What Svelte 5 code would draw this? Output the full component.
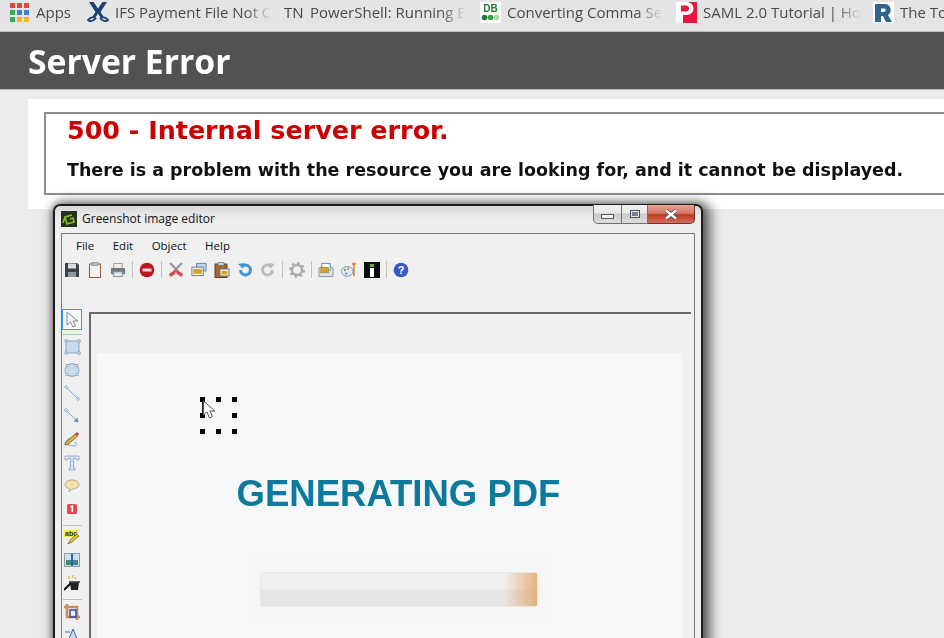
<script>
  const bookmarks = [
    { label: 'Apps', icon: 'apps', width: 58 },
    { label: 'IFS Payment File Not C', icon: 'ifs', width: 178, fade: true },
    { label: 'PowerShell: Running E', icon: 'tn', width: 177, fade: true },
    { label: 'Converting Comma Se', icon: 'db', width: 177, fade: true },
    { label: 'SAML 2.0 Tutorial | Ho', icon: 'p', width: 178, fade: true },
    { label: 'The To', icon: 'r', width: 71 }
  ];
  const appColors = ['#e0483e', '#e0483e', '#e0483e', '#3aa757', '#3b82d6', '#3b82d6', '#3aa757', '#f0b429', '#f0b429'];
  const menus = ['File', 'Edit', 'Object', 'Help'];
  const dots = [
    [0, 0], [16, 0], [32, 0],
    [0, 16], [32, 16],
    [0, 32], [16, 32], [32, 32]
  ];
</script>

<div class="page">
  <div class="bookmarks">
    {#each bookmarks as b}
      <div class="bookmark {b.icon}" style="width: {b.width}px">
        {#if b.icon === 'apps'}
          <div class="apps-grid">
            {#each appColors as c}<i style="background: {c}"></i>{/each}
          </div>
        {:else if b.icon === 'ifs'}
          <svg width="22" height="21" viewBox="0 0 22 21">
            <path d="M2 0h4.500L11 6.500 15.500 0H20l-6.500 10 3 4.500-2.500 1.500-3-4.500L8 16l-2.500-1.500 3-4.500z" fill="#1d3f73" />
            <path d="M1 18c3-3.500 6-3 7.500-1.500-2 2.500-5.500 3.500-7.500 1.500zM21 18c-3-3.500-6-3-7.500-1.500 2 2.500 5.500 3.500 7.500 1.500z" fill="none" stroke="#1d3f73" stroke-width="1.800" />
          </svg>
        {:else if b.icon === 'tn'}
          <span class="tn-mark">TN</span>
        {:else if b.icon === 'db'}
          <svg class="fav" width="21" height="21" viewBox="0 0 21 21">
            <rect width="21" height="21" fill="#fff" />
            <text x="10.500" y="10" text-anchor="middle" class="db-text">DB</text>
            <circle cx="4.500" cy="15.500" r="2.800" fill="#1f7a34" />
            <circle cx="10.500" cy="15.500" r="2.800" fill="#3d9b4e" />
            <circle cx="16.500" cy="15.500" r="2.800" fill="#a8d8ac" />
          </svg>
        {:else if b.icon === 'p'}
          <svg class="fav" width="21" height="21" viewBox="0 0 21 21">
            <rect width="21" height="21" fill="#e8173f" />
            <path d="M0 0h11a6.500 6.500 0 0 1 0 13H7v8H0z" fill="#fff" />
            <path d="M5 3.500h5a3 3 0 0 1 0 6H5z" fill="#e8173f" />
          </svg>
        {:else if b.icon === 'r'}
          <svg class="fav" width="21" height="21" viewBox="0 0 21 21">
            <rect width="21" height="21" fill="#fff" />
            <path d="M2 2h10a6 6 0 0 1 3 11l4 7h-6l-3-6H8v6H2zM8 6.500V10h3a1.700 1.700 0 0 0 0-3.500z" fill="#2f6690" />
          </svg>
        {/if}
        <span class="bm-label" class:fade={b.fade}>{b.label}</span>
      </div>
    {/each}
  </div>

  <header class="site-header"><h1>Server Error</h1></header>

  <main class="content">
    <fieldset class="error-box">
      <h2>500 - Internal server error.</h2>
      <h3>There is a problem with the resource you are looking for, and it cannot be displayed.</h3>
    </fieldset>
  </main>

  <section class="window">
    <div class="titlebar">
      <svg class="app-icon" width="16" height="16" viewBox="0 0 16 16">
        <rect width="16" height="16" fill="#26301e" />
        <path d="M2 12L4 6l7-2M4 6l2 7 7-2-1-4-3 1" fill="none" stroke="#7fc31c" stroke-width="1.600" />
      </svg>
      <span class="title">Greenshot image editor</span>
      <div class="caption-btns">
        <button class="cap min" aria-label="Minimize"><i></i></button>
        <button class="cap max" aria-label="Maximize"><i></i></button>
        <button class="cap close" aria-label="Close">
          <svg width="16" height="11" viewBox="0 0 16 11">
            <path d="M3 1.500l10 8M13 1.500l-10 8" fill="none" stroke="#4a4f60" stroke-width="4" />
            <path d="M3 1.500l10 8M13 1.500l-10 8" fill="none" stroke="#fff" stroke-width="2.400" />
          </svg>
        </button>
      </div>
    </div>

    <div class="client">
      <nav class="menu">
        {#each menus as m}<span>{m}</span>{/each}
      </nav>

      <div class="toolbar">
        <svg width="16" height="16" viewBox="0 0 16 16"><path d="M1 1h12l2 2v12H1z" fill="#3d4248" /><rect x="4" y="1.500" width="8" height="5" fill="#d9dde0" /><rect x="4" y="10" width="8" height="5" fill="#8d959c" /></svg>
        <svg width="16" height="16" viewBox="0 0 16 16"><rect x="2.500" y="2" width="11" height="13.500" fill="#f6f3ee" stroke="#8a5a3a" /><rect x="5" y="0.500" width="6" height="3" fill="#b9bdc1" stroke="#777" stroke-width=".6" /></svg>
        <svg width="16" height="16" viewBox="0 0 17 16"><rect x="4" y="1" width="9" height="6" fill="#eee" stroke="#999" /><rect x="1" y="6" width="15" height="6.500" rx="1" fill="#6f7a82" /><rect x="4" y="10" width="9" height="5" fill="#e7eaec" stroke="#8b9399" /></svg>
        <i class="sep"></i>
        <svg width="16" height="16" viewBox="0 0 16 16"><circle cx="8" cy="8" r="7.300" fill="#bb1520" /><rect x="3.500" y="6.500" width="9" height="3" fill="#f4d6d6" /></svg>
        <i class="sep"></i>
        <svg width="16" height="16" viewBox="0 0 16 16"><path d="M2 1l8 8M14 1L6 9" stroke="#8e979c" stroke-width="2" fill="none" /><path d="M6 8.500L1 12l1.500 3L7 12l1-2 1 2 4.500 3 1.500-3-5-3.500z" fill="#d9484a" /></svg>
        <svg width="16" height="16" viewBox="0 0 17 16"><rect x="6" y="1" width="10" height="8" fill="#b9d4ee" stroke="#6c86a0" /><rect x="1" y="5" width="12" height="9" fill="#f2f2ea" stroke="#6c7a88" /><rect x="2.500" y="7" width="9" height="5" fill="#d8a21f" /></svg>
        <svg width="16" height="16" viewBox="0 0 16 16"><rect x="1" y="2" width="12" height="13.500" fill="#a5683a" stroke="#6b4020" /><rect x="4" y="0.500" width="6" height="3" fill="#c9cdd0" stroke="#666" stroke-width=".6" /><rect x="6" y="7" width="9" height="7" fill="#f6f3e8" stroke="#6c7a88" /><rect x="7.500" y="9" width="6" height="3.500" fill="#d8a21f" /></svg>
        <svg width="16" height="16" viewBox="0 0 16 16"><path d="M3.500 8a5 5 0 1 0 2-4" fill="none" stroke="#3f94dc" stroke-width="3" /><path d="M1 2l6-1-1 6z" fill="#3f94dc" /></svg>
        <svg width="16" height="16" viewBox="0 0 16 16"><path d="M12.500 8a5 5 0 1 1-2-4" fill="none" stroke="#b9bcbe" stroke-width="3" /><path d="M15 2L9 1l1 6z" fill="#b9bcbe" /></svg>
        <i class="sep"></i>
        <svg width="16" height="16" viewBox="0 0 16 16"><circle cx="8" cy="8" r="5" fill="none" stroke="#a9acaf" stroke-width="2.400" /><circle cx="8" cy="8" r="7" fill="none" stroke="#a3a7aa" stroke-width="1.800" stroke-dasharray="2.500 3" /></svg>
        <i class="sep"></i>
        <svg width="16" height="16" viewBox="0 0 17 16"><path d="M1 6l7-4 8 4v9H1z" fill="#d7e3ea" stroke="#7e95a5" /><rect x="4" y="1" width="9" height="7" fill="#fff" stroke="#5b8fc5" /><rect x="3" y="5" width="8" height="6" fill="#d8a21f" stroke="#8a7a3a" stroke-width=".6" /></svg>
        <svg width="16" height="16" viewBox="0 0 18 16"><ellipse cx="7" cy="9.500" rx="6.500" ry="5.500" fill="#e9eef3" stroke="#5d92c2" /><circle cx="4.500" cy="8" r="1.300" fill="#4aa84a" /><circle cx="8" cy="6.500" r="1.300" fill="#e0803a" /><circle cx="6" cy="12" r="1.300" fill="#3f7fc9" /><path d="M14.500 1v14" stroke="#e8862a" stroke-width="2" /><path d="M12.500 1h4" stroke="#b98a5a" stroke-width="2.500" /></svg>
        <svg width="16" height="16" viewBox="0 0 16 16"><rect width="16" height="16" fill="#0d0d0d" /><rect x="6" y="2" width="4" height="3" fill="#55b62a" /><rect x="6" y="6" width="4" height="9" fill="#fff" /></svg>
        <i class="sep"></i>
        <svg width="16" height="16" viewBox="0 0 16 16"><circle cx="8" cy="8" r="7.300" fill="#3a58c4" /><text x="8" y="12" text-anchor="middle" class="help-q">?</text></svg>
      </div>

      <div class="workspace">
        <aside class="tools">
          <div class="tool selected">
            <svg width="14" height="17" viewBox="0 0 14 17"><path d="M2 1v13l3.500-3 2.500 5 2.500-1-2.500-5h5z" fill="#f4f4f4" stroke="#8a8d92" /></svg>
          </div>
          <i class="tool-sep"></i>
          <div class="tool"><svg width="17" height="16" viewBox="0 0 17 16"><rect x="2" y="2" width="13" height="12" fill="#c8d9ec" stroke="#85a3c5" /><g fill="#fff" stroke="#6f8fb5" stroke-width=".8"><circle cx="2" cy="2" r="1.300" /><circle cx="15" cy="2" r="1.300" /><circle cx="2" cy="14" r="1.300" /><circle cx="15" cy="14" r="1.300" /></g></svg></div>
          <div class="tool"><svg width="16" height="16" viewBox="0 0 16 16"><ellipse cx="8" cy="8" rx="7" ry="6.300" fill="#c8d9ec" stroke="#85a3c5" /><g fill="#fff" stroke="#6f8fb5" stroke-width=".8"><circle cx="3" cy="3.500" r="1.200" /><circle cx="13" cy="3.500" r="1.200" /><circle cx="3" cy="12.500" r="1.200" /><circle cx="13" cy="12.500" r="1.200" /></g></svg></div>
          <div class="tool"><svg width="16" height="16" viewBox="0 0 16 16"><path d="M2 2l12 12" stroke="#85a3c5" /><circle cx="2" cy="2" r="1.300" fill="#fff" stroke="#6f8fb5" stroke-width=".7" /><circle cx="14" cy="14" r="1.300" fill="#fff" stroke="#6f8fb5" stroke-width=".7" /></svg></div>
          <div class="tool"><svg width="16" height="16" viewBox="0 0 16 16"><path d="M2 2l11 11" stroke="#85a3c5" /><circle cx="2" cy="2" r="1.300" fill="#fff" stroke="#6f8fb5" stroke-width=".7" /><path d="M14.500 14.500l-5-1 4-4z" fill="#6f8fb5" /></svg></div>
          <div class="tool"><svg width="16" height="16" viewBox="0 0 16 16"><path d="M6 7c-6 2-4 8 3 8 5 0 4-4 1-4" fill="none" stroke="#85a3c5" /><path d="M1 12l10-9 2.500 2L4 13.500 1 14z" fill="#e8b030" stroke="#333" stroke-width=".6" /><path d="M11 3l2.500 2 1.500-2-2-2z" fill="#d43c3c" /></svg></div>
          <div class="tool"><svg width="16" height="16" viewBox="0 0 16 16"><path d="M1 1h14v4h-2l-1-1.500H9.500V13H11v2H5v-2h1.500V3.500H4L3 5H1z" fill="#d6e3f0" stroke="#85a3c5" stroke-width=".8" /></svg></div>
          <div class="tool"><svg width="16" height="16" viewBox="0 0 16 16"><path d="M8 2c4 0 7 2 7 4.500S12 11 8 11l-3 3 .5-3.500C3 10 1 8.500 1 6.500 1 4 4 2 8 2z" fill="#f3e2a8" stroke="#b0a98e" /></svg></div>
          <div class="tool"><svg width="12" height="12" viewBox="0 0 12 12"><rect x="1" y="1" width="10" height="10" rx="1.500" fill="#e8484c" /><path d="M4.500 4L6.300 3v6" fill="none" stroke="#fff" stroke-width="1.500" /></svg></div>
          <i class="tool-sep"></i>
          <div class="tool"><svg width="16" height="16" viewBox="0 0 16 16"><rect y="1" width="14" height="7" fill="#f2ec3c" /><text x="1" y="7" class="abc">abc</text><path d="M4 15l2-4 7-6 2 2-7 6z" fill="#e2c81e" stroke="#444" stroke-width=".6" /></svg></div>
          <div class="tool"><svg width="16" height="14" viewBox="0 0 16 14"><rect x=".5" y=".5" width="15" height="13" fill="#cfe0ea" stroke="#8f9ca5" /><rect x="2" y="7" width="12" height="5" fill="#3f8a7a" /><rect x="7" y="1" width="2" height="12" fill="#2b62b5" /></svg></div>
          <div class="tool"><svg width="16" height="16" viewBox="0 0 16 16"><path d="M6 7h9l-1 8H7z" fill="#222" /><path d="M5 7h11" stroke="#444" stroke-width="1.600" /><path d="M0 15l7-7" stroke="#111" stroke-width="2.200" /><path d="M5 1v3M9 0v3M12 2l-1 2" stroke="#d8b23a" stroke-width="1.200" /></svg></div>
          <i class="tool-sep"></i>
          <div class="tool"><svg width="16" height="16" viewBox="0 0 16 16"><path d="M3 0v13h13M0 3h13v13" fill="none" stroke="#c98d5a" stroke-width="2.600" /><rect x="6" y="6" width="6" height="7" fill="none" stroke="#2b4fb0" stroke-width="1.500" /></svg></div>
          <div class="tool"><svg width="16" height="16" viewBox="0 0 16 16"><path d="M9 2l5 12H4z" fill="#c8d9ec" stroke="#3a66b5" /><path d="M1 5h5" stroke="#3a66b5" /></svg></div>
        </aside>

        <div class="canvas">
          <div class="capture">
            <h4>GENERATING PDF</h4>
            <div class="progress-wrap"><div class="progress"></div></div>
            <div class="selection">
              {#each dots as [x, y]}
                <i class="dot" style="left: {x}px; top: {y}px"></i>
              {/each}
              <i class="sel-line"></i>
              <svg class="pointer" width="15" height="20" viewBox="0 0 15 20"><path d="M1.500 1v14l3.500-3 2.500 6 3-1.300-2.500-5.700h5z" fill="#fff" stroke="#555" /></svg>
            </div>
          </div>
        </div>
      </div>
    </div>
  </section>
</div>

<style>
  :global(body) {
    overflow: hidden;
    background: #ebebeb;
  }

  .page {
    position: relative;
    width: 944px;
    height: 638px;
    overflow: hidden;
    background: #ebebeb;
  }

  .bookmarks {
    display: flex;
    align-items: center;
    height: 32px;
    padding: 0 0 7px 10px;
    background: #e4e4e4;
    box-sizing: border-box;
    border-bottom: 1px solid #bcbcbc;
    overflow: hidden;
    filter: blur(0.35px);
  }

  .bookmark {
    display: flex;
    align-items: center;
    gap: 6px;
    height: 22px;
    flex-shrink: 0;
    margin-right: 19px;
    white-space: nowrap;
  }

  .bookmark svg {
    flex-shrink: 0;
  }

  .bm-label {
    font: 15px "Open Sans", sans-serif;
    color: #4a4a4a;
  }

  .bm-label.fade {
    -webkit-mask-image: linear-gradient(90deg, #000 84%, transparent 100%);
    mask-image: linear-gradient(90deg, #000 84%, transparent 100%);
  }

  .apps-grid {
    display: grid;
    grid-template-columns: repeat(3, 5px);
    gap: 2px;
    width: 19px;
    flex-shrink: 0;
    margin-right: 1px;
  }

  .apps-grid i {
    width: 5px;
    height: 5px;
  }

  .tn-mark {
    font: 15px "Open Sans", sans-serif;
    color: #444;
    width: 20px;
    flex-shrink: 0;
  }

  .db-text {
    font: bold 10px "Liberation Sans", sans-serif;
    fill: #1f7a34;
  }

  .site-header {
    height: 57px;
    padding-left: 28px;
    display: flex;
    align-items: center;
    background: #525252;
    border-bottom: 1px solid #b5b5b5;
    filter: blur(0.35px);
  }

  h1 {
    margin: 0;
    font: 700 33.700px "Open Sans", sans-serif;
    color: #fff;
  }

  .content {
    margin: 9px 0 0 28px;
    height: 110px;
    padding: 13px 0 0 16px;
    box-sizing: border-box;
    background: #fff;
    filter: blur(0.3px);
  }

  .error-box {
    box-sizing: border-box;
    width: 950px;
    height: 83px;
    margin: 0;
    padding: 0 0 0 21px;
    border: 2px solid #8c8c8c;
    border-right: none;
    font-family: "DejaVu Sans", sans-serif;
    font-weight: bold;
  }

  h2 {
    margin: 0;
    font-size: 25.400px;
    line-height: 32px;
    color: #cc0000;
  }

  h3 {
    margin: 13px 0 0;
    font-size: 17.480px;
    line-height: 22px;
    color: #111;
  }

  .window {
    position: absolute;
    left: 53px;
    top: 204px;
    width: 650px;
    height: 500px;
    box-sizing: border-box;
    padding: 0 6px;
    background: linear-gradient(#d8d8d8, #ececec 12px, #f0f0f0 28px);
    border: 2px solid #1c1c1c;
    border-radius: 7px 7px 0 0;
    box-shadow: 4px 2px 12px 4px rgba(0, 0, 0, 0.55), 0 0 6px rgba(0, 0, 0, 0.3);
  }

  .titlebar {
    position: relative;
    display: flex;
    align-items: center;
    gap: 5px;
    height: 27px;
    padding-bottom: 2px;
    box-sizing: border-box;
  }

  .title {
    font: 12px "Open Sans", sans-serif;
    color: #111;
  }

  .caption-btns {
    position: absolute;
    top: -1px;
    right: 0;
    display: flex;
    height: 19px;
  }

  .cap {
    display: flex;
    align-items: center;
    justify-content: center;
    padding: 0;
    height: 19px;
    border: 1px solid #6f6f6f;
    border-top: none;
    border-left-width: 0;
    background: linear-gradient(#f2f2f2, #e6e6e6 45%, #c8c8c8 50%, #dedede);
  }

  .cap.min {
    width: 29px;
    border-left-width: 1px;
    border-radius: 0 0 0 5px;
  }

  .cap.max {
    width: 26px;
  }

  .cap.close {
    width: 47px;
    border-color: #7a2a22;
    border-radius: 0 0 5px 0;
    background: linear-gradient(#e9a293, #d67867 45%, #bf3a22 55%, #d2705c);
  }

  .cap.min i {
    display: block;
    width: 11px;
    height: 3px;
    margin-top: 5px;
    border: 1px solid #555a6a;
    background: #f4f4f4;
  }

  .cap.max i {
    display: block;
    width: 8px;
    height: 6px;
    border: 1px solid #4a4f60;
    box-shadow: inset 0 0 0 1px #e6e6e6, inset 0 0 0 3px #7a7f8e;
  }

  .client {
    height: 470px;
    box-sizing: border-box;
    border: 1px solid #7a7a7a;
    border-bottom: none;
    background: #f0f0f0;
  }

  .menu {
    display: flex;
    gap: 18.500px;
    height: 23px;
    padding-left: 14px;
    align-items: center;
    font: 11.500px "Open Sans", sans-serif;
    color: #111;
  }

  .toolbar {
    display: flex;
    align-items: center;
    gap: 7px;
    height: 25px;
    padding-left: 2px;
  }

  .sep {
    width: 1px;
    height: 17px;
    margin: 0 -1px;
    background: #c0c0c0;
  }

  .workspace {
    display: flex;
    margin-top: 28px;
  }

  .tools {
    width: 27px;
    display: flex;
    flex-direction: column;
    align-items: center;
    box-sizing: border-box;
    padding-right: 7px;
  }

  .tool {
    display: flex;
    align-items: center;
    justify-content: center;
    width: 20px;
    height: 23.200px;
    flex-shrink: 0;
  }

  .tool.selected {
    height: 21px;
    margin-top: -1px;
    box-sizing: border-box;
    border: 1px solid #3399ff;
    background: #f4f8fc;
  }

  .tool-sep {
    width: 19px;
    height: 1px;
    margin-top: 4px;
    flex-shrink: 0;
    background: #bdbdbd;
  }

  .canvas {
    width: 602px;
    height: 340px;
    margin-top: 2px;
    box-sizing: border-box;
    padding: 39px 0 0 6px;
    border: solid #686868;
    border-width: 2px 0 0 2px;
    background: #f0f0f0;
  }

  .capture {
    position: relative;
    width: 585px;
    height: 400px;
    background: #f6f7f9;
    filter: blur(0.2px);
  }

  h4 {
    margin: 0;
    padding: 119px 0 0 18px;
    text-align: center;
    font: bold 36.500px/44px "Liberation Sans", sans-serif;
    color: #0e7a9b;
  }

  .progress-wrap {
    box-sizing: border-box;
    width: 293px;
    height: 66px;
    margin: 41px 0 0 155px;
    padding: 15px 7px 0 8px;
    background: #f6f6f6;
  }

  .progress {
    height: 35px;
    box-sizing: border-box;
    border: 1px solid #e8e8e8;
    border-radius: 2px;
    background:
      linear-gradient(90deg, transparent 88%, rgba(226, 158, 90, 0.75) 100%),
      linear-gradient(#efefef 49%, #e5e5e5 51%);
  }

  .selection {
    position: absolute;
    left: 103px;
    top: 44px;
    width: 40px;
    height: 40px;
  }

  .dot {
    position: absolute;
    width: 5px;
    height: 5px;
    background: #000;
  }

  .sel-line {
    position: absolute;
    left: 2px;
    top: 5px;
    width: 1px;
    height: 11px;
    background: #222;
  }

  .pointer {
    position: absolute;
    left: 2px;
    top: 3px;
  }

  .help-q {
    font: bold 11px "Liberation Sans", sans-serif;
    fill: #fff;
  }

  .abc {
    font: bold 7px "Liberation Sans", sans-serif;
    fill: #333;
  }
</style>
